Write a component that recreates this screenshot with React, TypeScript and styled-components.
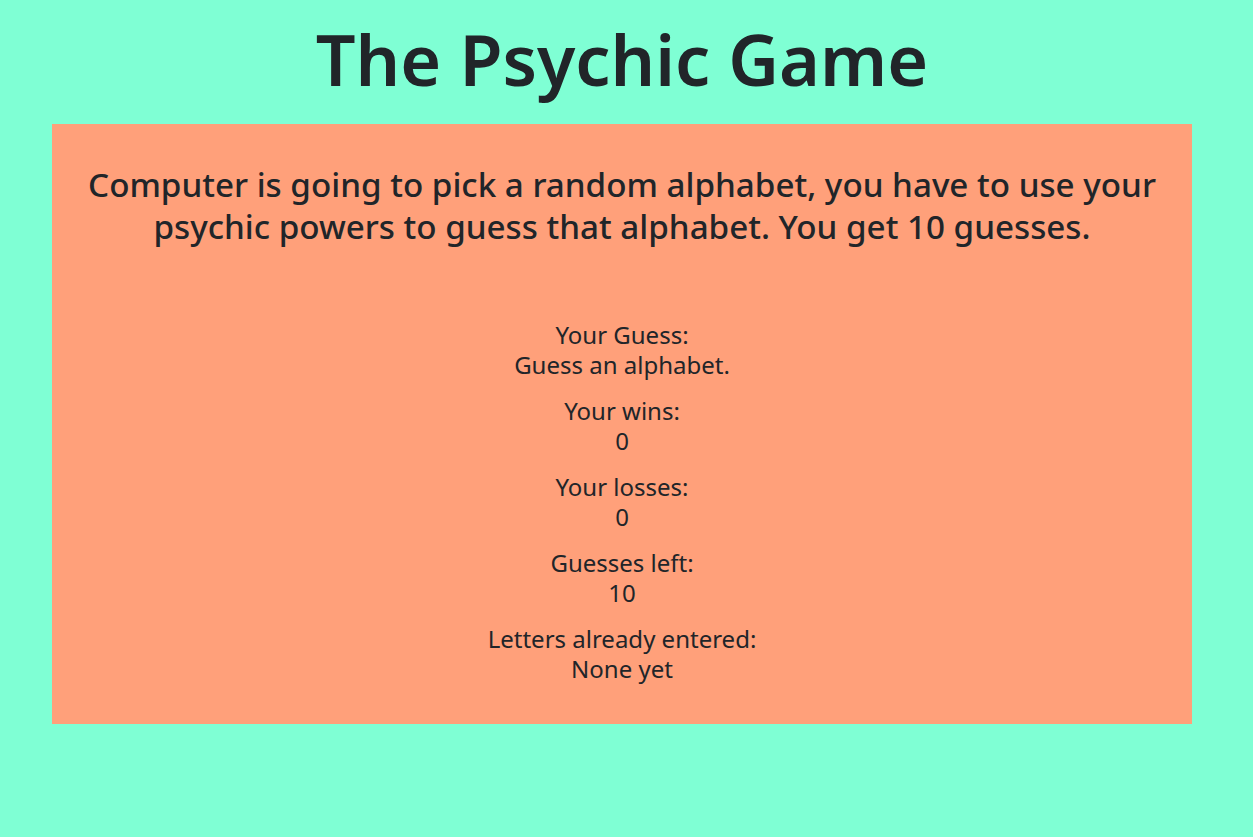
import React from "react";
import styled, { createGlobalStyle } from "styled-components";

const Global = createGlobalStyle`
  html, body { margin: 0; padding: 0; background: #7fffd4; }
  body {
    font-family: "Noto Sans", "Open Sans", sans-serif;
    color: #212529;
    -webkit-font-smoothing: antialiased;
  }
`;

const Page = styled.div`
  padding-right: 9px;
  min-height: 837px;
  box-sizing: border-box;
`;

const Title = styled.h1`
  margin: 0;
  padding-top: 16px;
  height: 124px;
  box-sizing: border-box;
  text-align: center;
  font-size: 70px;
  font-weight: 600;
  line-height: 86px;
`;

const Board = styled.section`
  width: 1140px;
  margin: 0 auto;
  background: #ffa07a;
  box-sizing: border-box;
  padding: 40px 15px 24px;
  text-align: center;
`;

const Intro = styled.h2`
  margin: 0 0 72px;
  font-size: 33.2px;
  font-weight: 500;
  line-height: 42px;
`;

const Stat = styled.p`
  margin: 0 0 16px;
  font-size: 24px;
  line-height: 30px;
`;

const stats: [string, string][] = [
  ["Your Guess:", "Guess an alphabet."],
  ["Your wins:", "0"],
  ["Your losses:", "0"],
  ["Guesses left:", "10"],
  ["Letters already entered:", "None yet"],
];

export default function App() {
  return (
    <Page>
      <Global />
      <Title>The Psychic Game</Title>
      <Board>
        <Intro>
          Computer is going to pick a random alphabet, you have to use your psychic powers to guess that alphabet. You get 10 guesses.
        </Intro>
        {stats.map(([label, value]) => (
          <Stat key={label}>
            {label}
            <br />
            {value}
          </Stat>
        ))}
      </Board>
    </Page>
  );
}
